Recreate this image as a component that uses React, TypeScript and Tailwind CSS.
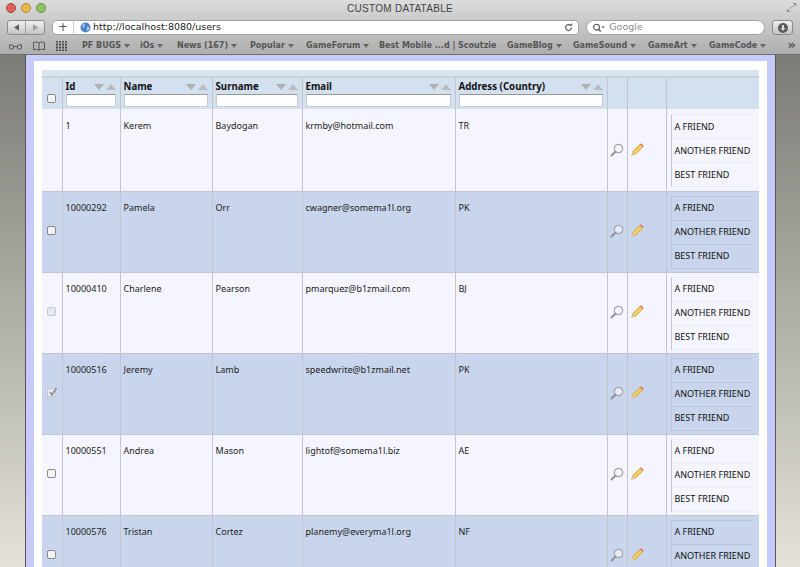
import React from "react";

const bookmarks = [
  { label: "PF BUGS", menu: true, w: "w-[58px]" },
  { label: "iOs", menu: true, w: "w-[37px]" },
  { label: "News (167)", menu: true, w: "w-[73px]" },
  { label: "Popular", menu: true, w: "w-[56px]" },
  { label: "GameForum", menu: true, w: "w-[73px]" },
  { label: "Best Mobile ...d | Scoutzie", menu: false, w: "w-[128px]" },
  { label: "GameBlog", menu: true, w: "w-[66px]" },
  { label: "GameSound", menu: true, w: "w-[75px]" },
  { label: "GameArt", menu: true, w: "w-[61px]" },
  { label: "GameCode", menu: true, w: "w-[70px]" },
];

const rows = [
  { id: "1", name: "Kerem", surname: "Baydogan", email: "krmby@hotmail.com", country: "TR", check: "none", h: "h-[82px]" },
  { id: "10000292", name: "Pamela", surname: "Orr", email: "cwagner@somema1l.org", country: "PK", check: "on", h: "h-[81px]" },
  { id: "10000410", name: "Charlene", surname: "Pearson", email: "pmarquez@b1zmail.com", country: "BJ", check: "disabled", h: "h-[81px]" },
  { id: "10000516", name: "Jeremy", surname: "Lamb", email: "speedwrite@b1zmail.net", country: "PK", check: "checked", h: "h-[81px]" },
  { id: "10000551", name: "Andrea", surname: "Mason", email: "lightof@somema1l.biz", country: "AE", check: "on", h: "h-[81px]" },
  { id: "10000576", name: "Tristan", surname: "Cortez", email: "planemy@everyma1l.org", country: "NF", check: "on", h: "h-[81px]" },
];

const columns = [
  { label: "Id", w: "w-[58px]" },
  { label: "Name", w: "w-[92px]" },
  { label: "Surname", w: "w-[90px]" },
  { label: "Email", w: "w-[153px]" },
  { label: "Address (Country)", w: "w-[152px]" },
];

function Checkbox({ state }: { state: string }) {
  if (state === "none") return null;
  const faded = state === "disabled" || state === "checked";
  return (
    <span
      className={`relative block h-[9px] w-[9px] rounded-[2px] border ${
        faded ? "border-[#c4c8d0] bg-[#e4e8f0]" : "border-[#8a8a8a] bg-[#f4f4f4]"
      }`}
    >
      {state === "checked" && (
        <svg viewBox="0 0 10 10" className="absolute -top-[2px] left-0 h-[10px] w-[10px]">
          <path d="M2 5l2 3 4.500-7" fill="none" stroke="#8b8f98" strokeWidth="1.600" />
        </svg>
      )}
    </span>
  );
}

function SortArrows() {
  return (
    <span className="flex gap-[2px]">
      <svg viewBox="0 0 10 6" className="h-[6px] w-[10px]">
        <path d="M0 0h10L5 6z" fill="#b0b0b0" />
      </svg>
      <svg viewBox="0 0 10 6" className="h-[6px] w-[10px]">
        <path d="M5 0l5 6H0z" fill="#bcbcbc" />
      </svg>
    </span>
  );
}

function Magnifier() {
  return (
    <svg viewBox="0 0 14 14" className="h-[14px] w-[14px]">
      <circle cx="8.500" cy="5.500" r="4.200" fill="#f2f5fa" fillOpacity="0.7" stroke="#a4a8ac" strokeWidth="1.200" />
      <path d="M5.300 8.700L1.500 12.500" stroke="#8f9498" strokeWidth="2" strokeLinecap="round" />
    </svg>
  );
}

function Pencil() {
  return (
    <svg viewBox="0 0 14 14" className="h-[14px] w-[14px]">
      <path d="M2.600 8.600L10 1.200l2.800 2.800-7.400 7.400z" fill="#efc854" stroke="#c39a34" strokeWidth="0.600" />
      <path d="M4 10l7.400-7.400" stroke="#f8e49a" strokeWidth="0.800" />
      <path d="M10 1.200l.9-.9 2.800 2.800-.9.900z" fill="#e06a5c" />
      <path d="M2.600 8.600l2.800 2.800L.8 13.200z" fill="#d9c59a" />
    </svg>
  );
}

function Friends({ even }: { even: boolean }) {
  const line = even ? "border-[#b7c4dc]" : "border-[#eeeef8]";
  return (
    <div className={`ml-[4px] mr-[7px] border-l border-t ${even ? "border-[#b7c4dc]" : "border-l-[#c6c8d0] border-t-[#eeeef8]"}`}>
      {["A FRIEND", "ANOTHER FRIEND", "BEST FRIEND"].map((f) => (
        <div key={f} className={`flex h-[24px] items-center whitespace-nowrap border-b pl-[3px] ${line}`}>
          {f}
        </div>
      ))}
    </div>
  );
}

function Toolbar() {
  return (
    <div className="h-[55px] border-b border-[#6f6f6f] bg-gradient-to-b from-[#dcdcdc] to-[#aeaeae] [font-family:'DejaVu_Sans',sans-serif]">
      <div className="relative flex h-[18px] items-center justify-center">
        <div className="absolute left-[6px] top-[3px] flex gap-[5px]">
          <span className="h-[10px] w-[10px] rounded-full border border-[#a8403c] bg-[#e0625a]" />
          <span className="h-[10px] w-[10px] rounded-full border border-[#b08a30] bg-[#e8b84c]" />
          <span className="h-[10px] w-[10px] rounded-full border border-[#629048] bg-[#8cc464]" />
        </div>
        <span className="text-[10px] leading-none tracking-[0.3px] text-[#444] [font-family:'Liberation_Sans',sans-serif]">CUSTOM DATATABLE</span>
        <svg viewBox="0 0 12 12" className="absolute right-[3px] top-[2px] h-[11px] w-[11px]">
          <path d="M7 1h4v4zM1 7v4h4z" fill="#8f8f8f" />
          <path d="M8 4L4 8" stroke="#8f8f8f" />
        </svg>
      </div>
      <div className="flex h-[19px] items-center pl-[7px] pr-[7px]">
        <div className="flex h-[15px] w-[38px] overflow-hidden rounded-[3px] border border-[#8c8c8c] bg-gradient-to-b from-[#f0f0f0] to-[#c4c4c4]">
          <span className="flex flex-1 items-center justify-center border-r border-[#a0a0a0]">
            <svg viewBox="0 0 6 8" className="h-[7px] w-[5px]"><path d="M6 0v8L0 4z" fill="#5e5e5e" /></svg>
          </span>
          <span className="flex flex-1 items-center justify-center">
            <svg viewBox="0 0 6 8" className="h-[7px] w-[5px]"><path d="M0 0v8l6-4z" fill="#9b9b9b" /></svg>
          </span>
        </div>
        <div className="ml-[7px] flex h-[15px] w-[528px] items-center rounded-[4px] border border-[#a2a2a2] bg-white pr-[5px]">
          <span className="w-[21px] border-r border-[#d0d0d0] text-center text-[12px] leading-[13px] text-[#555]">+</span>
          <svg viewBox="0 0 12 12" className="ml-[6px] h-[11px] w-[11px]">
            <circle cx="6" cy="6" r="5.500" fill="#4b84c8" />
            <path d="M3 2c2 0 3 1 2 3S2 6 3 9M8 5c2 0 3 1 2 3l-2 2c-1-2-1-3 0-5z" fill="#a8c8ea" />
          </svg>
          <span className="ml-[2px] flex-1 text-[9.500px] text-[#222]">http://localhost:8080/users</span>
          <svg viewBox="0 0 12 12" className="h-[9px] w-[9px]">
            <path d="M10 6a4 4 0 1 1-1.500-3.100" fill="none" stroke="#666" strokeWidth="1.700" />
            <path d="M7 3.800h4V0z" fill="#666" />
          </svg>
        </div>
        <div className="ml-[7px] flex h-[15px] w-[179px] items-center rounded-full border border-[#a2a2a2] bg-white pl-[5px]">
          <svg viewBox="0 0 16 12" className="h-[10px] w-[14px]">
            <circle cx="5" cy="5" r="3.500" fill="none" stroke="#555" strokeWidth="1.300" />
            <path d="M7.500 7.500L10 10.500" stroke="#555" strokeWidth="1.500" />
            <path d="M11 4h4l-2 2.500z" fill="#666" />
          </svg>
          <span className="ml-[3px] text-[9.500px] text-[#8b8b8b]">Google</span>
        </div>
        <div className="ml-[7px] flex h-[15px] w-[21px] items-center justify-center rounded-[3px] border border-[#8c8c8c] bg-gradient-to-b from-[#eeeeee] to-[#c4c4c4]">
          <svg viewBox="0 0 10 10" className="h-[10px] w-[10px]">
            <circle cx="5" cy="5" r="5" fill="#5a5a5a" />
            <path d="M4 2h2v3h1.500L5 8 2.500 5H4z" fill="#dcdcdc" />
          </svg>
        </div>
      </div>
      <div className="relative flex h-[17px] items-center pl-[8px] pt-[1px] text-[#555]">
        <svg viewBox="0 0 16 8" className="h-[7px] w-[15px] shrink-0" fill="none" stroke="#4a4a4a">
          <circle cx="3.500" cy="4.500" r="2.500" />
          <circle cx="12.500" cy="4.500" r="2.500" />
          <path d="M6 4h4M1 3l1-2M15 3l-1-2" />
        </svg>
        <svg viewBox="0 0 14 11" className="ml-[9px] h-[10px] w-[14px] shrink-0" fill="none" stroke="#4a4a4a">
          <path d="M7 2C5 1 3 1 1 1.500v8C3 9 5 9 7 10c2-1 4-1 6-.5v-8C11 1 9 1 7 2zM7 2v8" />
        </svg>
        <svg viewBox="0 0 12 10" className="ml-[10px] h-[10px] w-[12px] shrink-0">
          <path d="M0 .5h12M0 3.500h12M0 6.500h12M0 9.500h12" stroke="#4a4a4a" strokeDasharray="2 1" strokeWidth="2" />
        </svg>
        <div className="ml-[14px] flex whitespace-nowrap text-[8px] font-bold">
          {bookmarks.map((b) => (
            <span key={b.label} className={`flex shrink-0 items-center gap-[3px] ${b.w}`}>
              {b.label}
              {b.menu && (
                <svg viewBox="0 0 6 4" className="h-[4px] w-[6px]"><path d="M0 0h6L3 4z" fill="#666" /></svg>
              )}
            </span>
          ))}
        </div>
        <span className="absolute right-[4px] top-[1px] text-[13px] font-bold leading-[14px] text-[#555]">»</span>
      </div>
    </div>
  );
}

function DataTable() {
  const cellBorder = "border-l border-[#c4c6ce]";
  return (
    <table className="w-[717px] table-fixed border-collapse text-[9px] text-[#222] [font-family:'Noto_Sans',sans-serif]">
      <colgroup>
        <col className="w-[20px]" />
        {columns.map((c) => (
          <col key={c.label} className={c.w} />
        ))}
        <col className="w-[20px]" />
        <col className="w-[39px]" />
        <col className="w-[93px]" />
      </colgroup>
      <thead className="bg-[#d3e0f0]">
        <tr className="h-[7px] border-b-2 border-[#c9d3de] bg-[#d9e4f0]">
          <td colSpan={9} className="p-0" />
        </tr>
        <tr className="h-[32px]">
          <th className="p-0 align-bottom">
            <div className="flex justify-center pb-[6px]">
              <Checkbox state="on" />
            </div>
          </th>
          {columns.map((c) => (
            <th key={c.label} className={`${cellBorder} pb-[2px] pl-[3px] pr-[4px] align-bottom`}>
              <div className="flex h-[15px] items-center justify-between text-[9.700px] font-bold leading-none text-[#111]">
                {c.label}
                <SortArrows />
              </div>
              <div className="h-[13px] border border-[#c8ccd0] border-t-[#999] bg-white" />
            </th>
          ))}
          <th className={cellBorder} />
          <th className={cellBorder} />
          <th className={cellBorder} />
        </tr>
      </thead>
      <tbody>
        {rows.map((r, i) => {
          const even = i % 2 === 1;
          const first = i === 0;
          return (
            <tr key={r.id} className={`${r.h} border-b border-[#c4c6ce] ${even ? "bg-[#c8d5ec]" : "bg-[#f5f5ff]"}`}>
              <td className="p-0 align-top">
                <div className="flex justify-center pt-[34px]">
                  <Checkbox state={r.check} />
                </div>
              </td>
              {[r.id, r.name, r.surname, r.email, r.country].map((v, j) => (
                <td key={j} className={`${cellBorder} px-[3px] align-top leading-[12px] ${first ? "pt-[11px]" : "pt-[10px]"}`}>
                  {v}
                </td>
              ))}
              <td className={`${cellBorder} p-0 align-top`}>
                <div className={`flex justify-center ${first ? "pt-[34px]" : "pt-[32px]"}`}>
                  <Magnifier />
                </div>
              </td>
              <td className={`${cellBorder} p-0 align-top`}>
                <div className={`pl-[2px] ${first ? "pt-[34px]" : "pt-[32px]"}`}>
                  <Pencil />
                </div>
              </td>
              <td className={`${cellBorder} p-0 align-top text-[#111] ${first ? "pt-[5px]" : "pt-[4px]"}`}>
                <Friends even={even} />
              </td>
            </tr>
          );
        })}
      </tbody>
    </table>
  );
}

export default function App() {
  return (
    <div className="flex h-[567px] w-[800px] flex-col overflow-hidden">
      <Toolbar />
      <div className="flex min-h-0 flex-1 bg-gradient-to-b from-[#7c7c76] to-[#e4e2da]">
        <div className="ml-[25px] w-[751px] border-x border-[#555] bg-[#c6cbf9] px-[8px] pt-[6px]">
          <div className="h-full bg-white pl-[8px] pt-[9px]">
            <DataTable />
          </div>
        </div>
      </div>
    </div>
  );
}
